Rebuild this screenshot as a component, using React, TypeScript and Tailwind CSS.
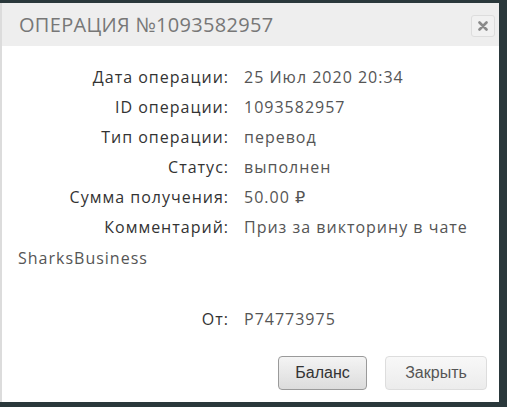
import React from 'react';

const rows: [string, string][] = [
  ['Дата операции:', '25 Июл 2020 20:34'],
  ['ID операции:', '1093582957'],
  ['Тип операции:', 'перевод'],
  ['Статус:', 'выполнен'],
  ['Сумма получения:', '50.00 ₽'],
];

const font = { fontFamily: '"Open Sans", "DejaVu Sans", sans-serif' };

export default function App() {
  return (
    <div className="w-[507px] h-[407px] bg-[#2a383b] pt-[3px] pr-[8px] pb-[5px] overflow-hidden">
      <div className="w-[499px] h-[399px] bg-white border-l-2 border-[#dcdcdc] flex flex-col rounded-tr-[3px]" style={font}>
        {/* Header */}
        <div className="h-[43px] bg-[#eeeeee] flex items-center justify-between pl-[17px] pr-[4px] shrink-0">
          <span className="text-[20px] tracking-[0.3px] text-[#777777] leading-none">ОПЕРАЦИЯ №1093582957</span>
          <button className="w-[24px] h-[22px] mt-[2px] rounded-[3px] border border-[#dddddd] bg-[#f1f1f1] flex items-center justify-center">
            <svg width="10" height="10" viewBox="0 0 10 10">
              <path d="M1.5 1.5 L8.5 8.5 M8.5 1.5 L1.5 8.5" stroke="#8a8a8a" strokeWidth="2.6" strokeLinecap="round" />
            </svg>
          </button>
        </div>

        {/* Body */}
        <div className="pt-[16px] pl-[16px] pr-[20px] text-[16px] leading-[30px] tracking-[1px]">
          {rows.map(([label, value]) => (
            <div key={label}>
              <span className="inline-block w-[211px] text-right text-[#333333]">{label}</span>
              <span className="ml-[15px] text-[#555555]">{value}</span>
            </div>
          ))}
          <div className="leading-[31px]">
            <span className="inline-block w-[211px] text-right text-[#333333]">Комментарий:</span>
            <span className="ml-[15px] text-[#555555]">Приз за викторину в чате SharksBusiness</span>
          </div>
          <div className="h-[30px]" />
          <div>
            <span className="inline-block w-[211px] text-right text-[#333333]">От:</span>
            <span className="ml-[15px] text-[#555555]">P74773975</span>
          </div>
        </div>

        {/* Footer */}
        <div className="flex justify-end gap-[18px] pr-[12px] mt-[22px]" style={{ fontFamily: '"Liberation Sans", Arial, sans-serif' }}>
          <button className="w-[89px] h-[34px] rounded-[4px] border border-[#9a9a9a] bg-gradient-to-b from-[#f4f4f4] to-[#dcdcdc] text-[16px] text-[#333333]">
            Баланс
          </button>
          <button className="w-[102px] h-[34px] rounded-[4px] border border-[#dddddd] bg-gradient-to-b from-[#f8f8f8] to-[#ececec] text-[16px] text-[#555555]">
            Закрыть
          </button>
        </div>
      </div>
    </div>
  );
}
